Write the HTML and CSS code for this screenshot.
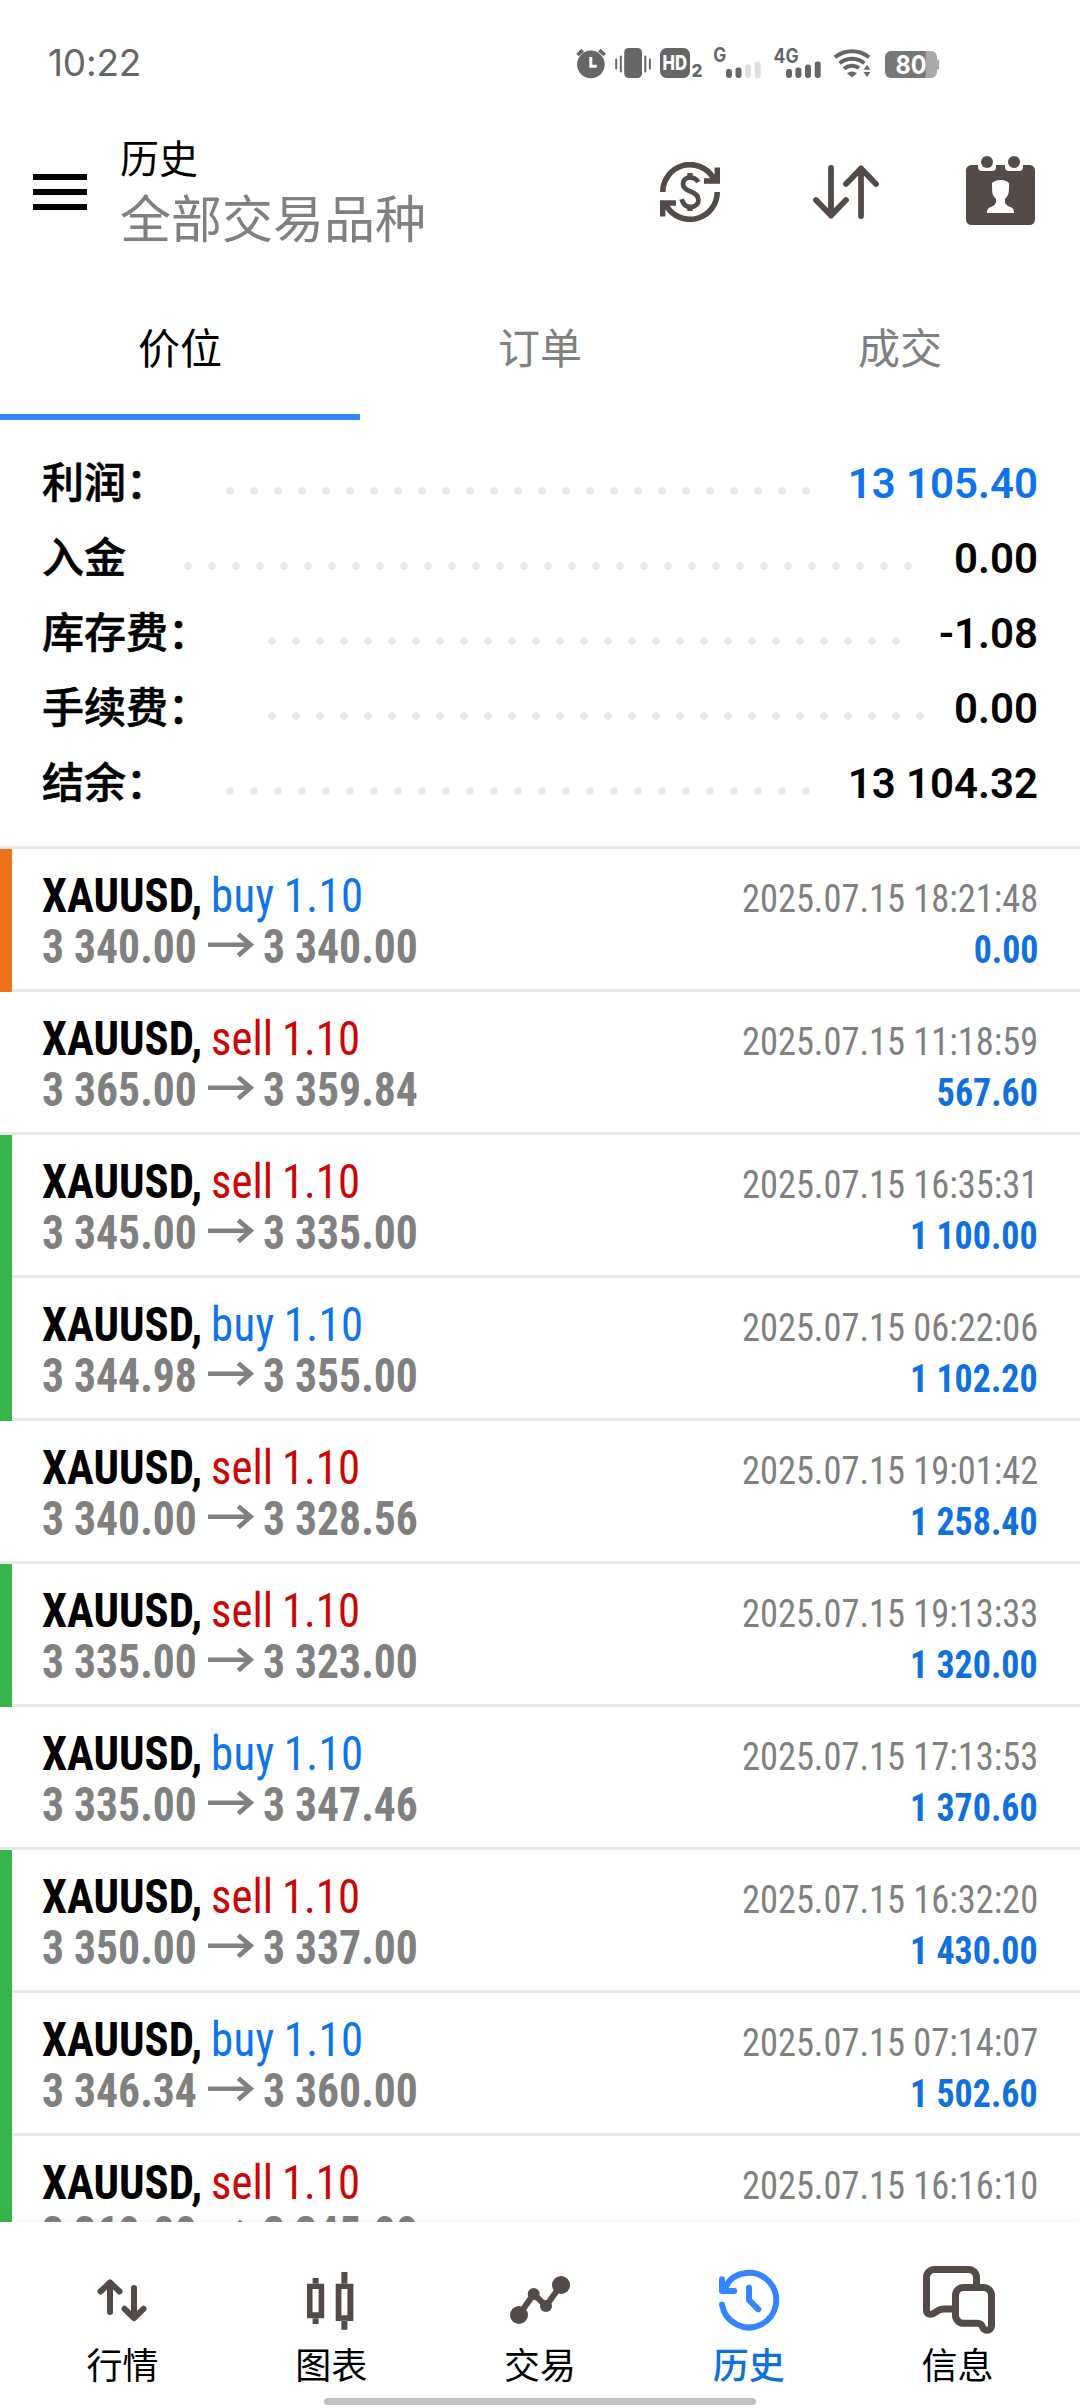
FILE: index.html
```html
<!DOCTYPE html>
<html lang="zh-CN">
<head>
<meta charset="utf-8">
<title>历史</title>
<link rel="stylesheet" href="styles.css">
</head>
<body>
<svg class="defs" aria-hidden="true">
  <symbol id="arrow" viewBox="0 0 46 26"><path d="M0 12.7H42M30.3 2.2L42.6 12.7L30.3 23.4" fill="none" stroke="currentColor" stroke-width="4.6"/></symbol>
</svg>
<div class="screen">
  <div class="status">
    <span class="clock">10:22</span>
    <svg class="status-icons" width="366" height="40" viewBox="574 44 366 40" fill="#666">
      <g class="alarm">
        <circle cx="590.9" cy="64.4" r="13.8"/>
        <path d="M577.5 55L582.8 50.2M604.7 55L599.4 50.2" stroke="#666" stroke-width="3.6"/>
        <path d="M590.8 57V66.2H596.8" fill="none" stroke="#fff" stroke-width="3"/>
      </g>
      <g class="vibrate">
        <rect x="624.2" y="48" width="17.8" height="30" rx="4.5"/>
        <path d="M616.2 59.5V68.5M620.8 56.5V71.5M645.3 56.5V71.5M649.9 59.5V68.5" stroke="#666" stroke-width="2" stroke-linecap="round"/>
      </g>
      <rect x="660" y="48" width="30" height="30" rx="6.5"/>
      <text x="662.6" y="70.2" class="st-text heavy white" font-size="19.5" textLength="24.5" lengthAdjust="spacingAndGlyphs">HD</text>
      <text x="691.6" y="77.3" class="st-text heavy" font-size="17.5" textLength="11" lengthAdjust="spacingAndGlyphs">2</text>
      <text x="713.3" y="62.3" class="st-text" font-size="19.5" textLength="13" lengthAdjust="spacingAndGlyphs">G</text>
      <rect x="726" y="69" width="6" height="9" rx="2.4"/>
      <rect x="735.5" y="67.4" width="6" height="10.6" rx="2.4"/>
      <rect x="745" y="64.6" width="6" height="13.4" rx="2.4" fill="#e0e0e0"/>
      <rect x="754.7" y="61.6" width="6" height="16.4" rx="2.4" fill="#e0e0e0"/>
      <text x="773.6" y="62.8" class="st-text" font-size="19.5" textLength="25" lengthAdjust="spacingAndGlyphs">4G</text>
      <rect x="786" y="69" width="6" height="9" rx="2.4"/>
      <rect x="795.4" y="67.4" width="6" height="10.6" rx="2.4"/>
      <rect x="805" y="64.6" width="6" height="13.4" rx="2.4"/>
      <rect x="814.7" y="61.6" width="6" height="16.4" rx="2.4"/>
      <g class="wifi" fill="none" stroke="#666" stroke-width="3.9">
        <path d="M835 57.2A27 27 0 0 1 869 57.2"/>
        <path d="M839.6 63.2A19.5 19.5 0 0 1 864.4 63.2"/>
        <path d="M844 68.8A12 12 0 0 1 859 68"/>
      </g>
      <path d="M847 73.2Q852 69.8 857 73.2L852 77.4Z"/>
      <path d="M863.6 69.8L867 64.8L870.4 69.8ZM863.6 72L867 77L870.4 72Z"/>
      <path d="M931 51a6 6 0 0 1 6 6v2.5h1.2a1 1 0 0 1 1 1v8a1 1 0 0 1-1 1H937V72a6 6 0 0 1-6 6h-6V51Z" fill="#a9a9a9"/>
      <path d="M925.7 51V78H891a6 6 0 0 1-6-6V57a6 6 0 0 1 6-6Z" fill="#777"/>
      <text x="895.6" y="74.4" class="st-text white" font-size="26" textLength="31" lengthAdjust="spacingAndGlyphs">80</text>
    </svg>
  </div>

  <header class="header">
    <svg class="menu" width="54" height="36" viewBox="0 0 54 36"><path d="M0 3H54M0 18H54M0 33H54" stroke="#000" stroke-width="6"/></svg>
    <div class="titles">
      <h1>历史</h1>
      <div class="symbols">全部交易品种</div>
    </div>
    <div class="actions">
      <svg class="act sync" width="60" height="60" viewBox="0 0 60 60">
        <g fill="none" stroke="#544a47" stroke-width="5.6">
          <path d="M2.8 30A27.2 27.2 0 0 1 53.4 16"/>
          <path d="M57.2 30A27.2 27.2 0 0 1 6.6 44"/>
          <path d="M38.3 20.2C36.6 17 34 15.6 30 15.6C25.8 15.6 23 18.3 23 21.8C23 25.8 26 27.8 30 29.3C34.8 31 38.4 33.3 38.4 38C38.4 42.3 34.7 45 30.3 45C26 45 23.2 42.8 21.6 37.2" stroke-width="4.8"/>
          <path d="M30 11V16M30 44.5V49" stroke-width="5.4"/>
        </g>
        <path d="M60 5.6V21.8H44V16.3H51L54.6 12V5.6Z M0 54.4V38.2H16V43.7H9L5.4 48V54.4Z" fill="#544a47"/>
      </svg>
      <svg class="act sort" width="66" height="54" viewBox="0 0 66 54" fill="none" stroke="#544a47" stroke-width="5.8" stroke-linecap="round" stroke-linejoin="round">
        <path d="M18 2.9V50.6M3 35L18 50.6L33 35M48 51V3.4M33 19L48 3.4L63 19"/>
      </svg>
      <svg class="act calendar" width="69" height="69" viewBox="0 0 69 69" fill="#544a47">
        <rect y="9" width="69" height="60" rx="5.5"/>
        <path d="M12 8H30V11a4 4 0 0 1-4 4H16a4 4 0 0 1-4-4ZM39 8H57V11a4 4 0 0 1-4 4H43a4 4 0 0 1-4-4Z" fill="#fff"/>
        <circle cx="21" cy="6" r="6"/><circle cx="48" cy="6" r="6"/>
        <path d="M26 27C28 25 31 24 34.5 24C38 24 42 25.4 43.2 27.6L42.8 36C42.4 39.5 40.5 41.5 39 42.8V46.5C40 49.5 43 50.5 45 51.3C47 52.2 48 53.5 48 57H21C21 53.5 22 52.2 24 51.3C26 50.5 29 49.5 30 46.5V42.8C28.5 41.5 26.6 39.5 26.2 36Z" fill="#fff"/>
      </svg>
    </div>
  </header>

  <nav class="tabs">
    <a class="tab active">价位</a>
    <a class="tab">订单</a>
    <a class="tab">成交</a>
  </nav>

  <section class="summary">
    <div class="line"><span>利润：</span><i class="dots" style="--n:25"></i><b class="blue">13 105.40</b></div>
    <div class="line"><span>入金</span><i class="dots" style="--n:31"></i><b>0.00</b></div>
    <div class="line"><span>库存费：</span><i class="dots" style="--n:27"></i><b>-1.08</b></div>
    <div class="line"><span>手续费：</span><i class="dots" style="--n:28"></i><b>0.00</b></div>
    <div class="line"><span>结余：</span><i class="dots" style="--n:25"></i><b>13 104.32</b></div>
  </section>

  <main class="deals">
    <article class="deal sl"><i class="mark"></i><div class="body">
      <div class="left"><div class="name"><b>XAUUSD,</b> <span class="buy">buy 1.10</span></div><div class="prices"><span>3 340.00</span><svg><use href="#arrow"/></svg><span>3 340.00</span></div></div>
      <div class="right"><time>2025.07.15 18:21:48</time><b>0.00</b></div></div></article>
    <article class="deal"><i class="mark"></i><div class="body">
      <div class="left"><div class="name"><b>XAUUSD,</b> <span class="sell">sell 1.10</span></div><div class="prices"><span>3 365.00</span><svg><use href="#arrow"/></svg><span>3 359.84</span></div></div>
      <div class="right"><time>2025.07.15 11:18:59</time><b>567.60</b></div></div></article>
    <article class="deal tp"><i class="mark"></i><div class="body">
      <div class="left"><div class="name"><b>XAUUSD,</b> <span class="sell">sell 1.10</span></div><div class="prices"><span>3 345.00</span><svg><use href="#arrow"/></svg><span>3 335.00</span></div></div>
      <div class="right"><time>2025.07.15 16:35:31</time><b>1 100.00</b></div></div></article>
    <article class="deal tp"><i class="mark"></i><div class="body">
      <div class="left"><div class="name"><b>XAUUSD,</b> <span class="buy">buy 1.10</span></div><div class="prices"><span>3 344.98</span><svg><use href="#arrow"/></svg><span>3 355.00</span></div></div>
      <div class="right"><time>2025.07.15 06:22:06</time><b>1 102.20</b></div></div></article>
    <article class="deal"><i class="mark"></i><div class="body">
      <div class="left"><div class="name"><b>XAUUSD,</b> <span class="sell">sell 1.10</span></div><div class="prices"><span>3 340.00</span><svg><use href="#arrow"/></svg><span>3 328.56</span></div></div>
      <div class="right"><time>2025.07.15 19:01:42</time><b>1 258.40</b></div></div></article>
    <article class="deal tp"><i class="mark"></i><div class="body">
      <div class="left"><div class="name"><b>XAUUSD,</b> <span class="sell">sell 1.10</span></div><div class="prices"><span>3 335.00</span><svg><use href="#arrow"/></svg><span>3 323.00</span></div></div>
      <div class="right"><time>2025.07.15 19:13:33</time><b>1 320.00</b></div></div></article>
    <article class="deal"><i class="mark"></i><div class="body">
      <div class="left"><div class="name"><b>XAUUSD,</b> <span class="buy">buy 1.10</span></div><div class="prices"><span>3 335.00</span><svg><use href="#arrow"/></svg><span>3 347.46</span></div></div>
      <div class="right"><time>2025.07.15 17:13:53</time><b>1 370.60</b></div></div></article>
    <article class="deal tp"><i class="mark"></i><div class="body">
      <div class="left"><div class="name"><b>XAUUSD,</b> <span class="sell">sell 1.10</span></div><div class="prices"><span>3 350.00</span><svg><use href="#arrow"/></svg><span>3 337.00</span></div></div>
      <div class="right"><time>2025.07.15 16:32:20</time><b>1 430.00</b></div></div></article>
    <article class="deal tp"><i class="mark"></i><div class="body">
      <div class="left"><div class="name"><b>XAUUSD,</b> <span class="buy">buy 1.10</span></div><div class="prices"><span>3 346.34</span><svg><use href="#arrow"/></svg><span>3 360.00</span></div></div>
      <div class="right"><time>2025.07.15 07:14:07</time><b>1 502.60</b></div></div></article>
    <article class="deal tp"><i class="mark"></i><div class="body">
      <div class="left"><div class="name"><b>XAUUSD,</b> <span class="sell">sell 1.10</span></div><div class="prices"><span>3 360.00</span><svg><use href="#arrow"/></svg><span>3 345.00</span></div></div>
      <div class="right"><time>2025.07.15 16:16:10</time></div></div></article>
  </main>

  <nav class="bottom">
    <a class="item">
      <svg viewBox="0 -6 70 72" fill="none" stroke="currentColor" stroke-width="6" stroke-linecap="round" stroke-linejoin="round"><path d="M23 43V13.5M13.5 22.5L23 13.3L32.5 22.5M47 19V48.5M37.5 39.8L47 49L56.5 39.8"/></svg>
      <span>行情</span></a>
    <a class="item">
      <svg viewBox="0 -6 70 72" fill="currentColor" fill-rule="evenodd"><path d="M11 14.7H28.2V49.2H11ZM16.5 20V43.3H22.6V20ZM16.6 9H22.6V15H16.6ZM16.6 49H22.6V55H16.6ZM39.7 14.7H57.4V52H39.7ZM45.4 20V46.3H51.4V20ZM45.4 3H51.4V15H45.4ZM45.4 51.8H51.4V60.7H45.4Z"/></svg>
      <span>图表</span></a>
    <a class="item">
      <svg viewBox="0 -6 70 72" fill="currentColor"><path d="M14 46L28.7 25L41 37L56 16" fill="none" stroke="currentColor" stroke-width="6"/><circle cx="14" cy="46" r="9"/><circle cx="28.7" cy="25" r="6"/><circle cx="41" cy="37" r="6"/><circle cx="56" cy="16" r="9"/></svg>
      <span>交易</span></a>
    <a class="item current">
      <svg viewBox="0 -6 70 72" fill="none" stroke="#3385ff" stroke-width="6" stroke-linecap="round" stroke-linejoin="round"><path d="M8 35.5A27.3 27.3 0 1 0 11.3 17.5"/><path d="M8 10.3V22H20.2M8 22L13 16"/><path d="M35 18.7V31L44.3 40.3"/></svg>
      <span>历史</span></a>
    <a class="item">
      <svg viewBox="0 -6 70 72" fill="none" stroke="currentColor" stroke-width="7" stroke-linejoin="round"><path d="M53.5 19V8.5a8 8 0 0 0-8-8H11.5a8 8 0 0 0-8 8V41C3.5 46 8.5 46.3 12.5 43.2C16 40.6 17.5 40 21 40H31"/><path d="M40.5 18.5H60.5a8 8 0 0 1 8 8V56.5C68.5 62.5 61 62.5 59.5 58C58.6 55.3 57.5 54.3 54 54.3H40.5a8 8 0 0 1-8-8V26.5a8 8 0 0 1 8-8Z"/></svg>
      <span>信息</span></a>
    <i class="home"></i>
  </nav>
</div>
</body>
</html>
```
FILE: styles.css
```css
* { box-sizing: border-box; margin: 0; padding: 0; }

body {
  background: #fff;
  color: #000;
  font-family: Roboto, "Noto Sans CJK SC", sans-serif;
}

i { font-style: normal; }

.defs { display: none; }

.screen {
  display: flex;
  flex-direction: column;
  width: 1080px;
  height: 2408px;
  overflow: hidden;
}

/* status bar */
.status {
  display: flex;
  align-items: flex-start;
  justify-content: space-between;
  height: 110px;
  padding: 43px 140px 0 48px;
}
.clock {
  font: 400 37px/40px Inter, sans-serif;
  letter-spacing: -.2px;
  color: #666;
}
.status-icons { margin-top: 1px; }
.st-text { font-family: Inter, sans-serif; font-weight: 700; }
.heavy { font-weight: 800; }
.white { fill: #fff; }

/* header */
.header {
  display: flex;
  align-items: flex-start;
  height: 164px;
  padding: 26px 45px 0 33px;
}
.menu { margin-top: 38px; }
.titles { margin-left: 33px; }
.titles h1 { font-size: 39px; font-weight: 400; line-height: 48px; }
.symbols { font-size: 51px; line-height: 73px; color: #808080; }
.actions { display: flex; align-items: flex-start; margin-left: auto; }
.sync { margin-top: 26px; }
.sort { margin: 29px 87px 0 93px; }
.calendar { margin-top: 20px; }

/* tabs */
.tabs { display: grid; grid-template-columns: repeat(3, 1fr); height: 146px; }
.tab {
  padding-top: 12px;
  border-bottom: 6px solid transparent;
  font-size: 42px;
  line-height: 128px;
  text-align: center;
  color: #808080;
}
.tab.active { color: #000; border-color: #3385ff; }

/* summary */
.summary {
  padding: 26px 42px 25px;
  border-bottom: 3px solid #e7e7e7;
}
.line {
  display: flex;
  height: 75px;
  font-size: 42px;
  font-weight: 500;
  line-height: 75px;
  white-space: nowrap;
}
.line span { -webkit-text-stroke: .6px #000; }
.line b { margin-left: auto; font-weight: 600; }
.line .blue { color: #0d73ee; }
.dots {
  width: calc(var(--n) * 24px);
  height: 8px;
  margin: 41px 0 0 50px;
  background: radial-gradient(circle, #e7e7e7 3.4px, transparent 4.1px) 0 0 / 24px 8px repeat-x;
}

/* deals */
.deals {
  flex: 1;
  min-height: 0;
  overflow: hidden;
  font-family: "Roboto Condensed", Roboto, sans-serif;
  white-space: nowrap;
}
.deal { display: flex; height: 143px; }
.mark { width: 12px; border-bottom: 3px solid #e7e7e7; }
.sl .mark { background: #ee7219; border-color: #ee7219; }
.tp .mark { background: #38b44c; border-color: #38b44c; }
.body {
  display: flex;
  flex: 1;
  justify-content: space-between;
  padding: 21px 42px 0 30px;
  border-bottom: 3px solid #e7e7e7;
}
.name {
  font-size: 48px;
  line-height: 51px;
  word-spacing: -1.6px;
  transform: scaleX(.933);
  transform-origin: left;
}
.buy { color: #0d73ee; letter-spacing: .4px; }
.sell { color: #cc0605; }
.prices {
  display: flex;
  font-size: 48px;
  font-weight: 700;
  line-height: 51px;
  color: #808080;
}
.prices span { transform: scaleX(.908); transform-origin: left; }
.prices svg { width: 46px; height: 26px; margin: 11px 9px 0 -4.6px; }
.right {
  display: flex;
  flex-direction: column;
  align-items: flex-end;
  padding-top: 4px;
  font-size: 39px;
  line-height: 51px;
}
.right time { color: #808080; transform: scaleX(.934); transform-origin: right; }
.right b { color: #1070de; transform: scaleX(.92); transform-origin: right; }

/* bottom navigation */
.bottom {
  position: relative;
  display: grid;
  grid-template-columns: repeat(5, 1fr);
  height: 186px;
  padding: 41px 18px 0;
  background: #fff;
  box-shadow: 0 -2px 8px rgba(0, 0, 0, .05);
}
.item { display: flex; flex-direction: column; align-items: center; color: #544a47; }
.item svg { width: 70px; height: 72px; overflow: visible; }
.item span { margin-top: 10px; font-size: 36px; line-height: 44px; color: #000; }
.item.current span { color: #1070de; font-weight: 500; }
.home {
  position: absolute;
  left: 324px;
  bottom: 3px;
  width: 432px;
  height: 7px;
  border-radius: 4px;
  background: #c1c1c1;
}
```
